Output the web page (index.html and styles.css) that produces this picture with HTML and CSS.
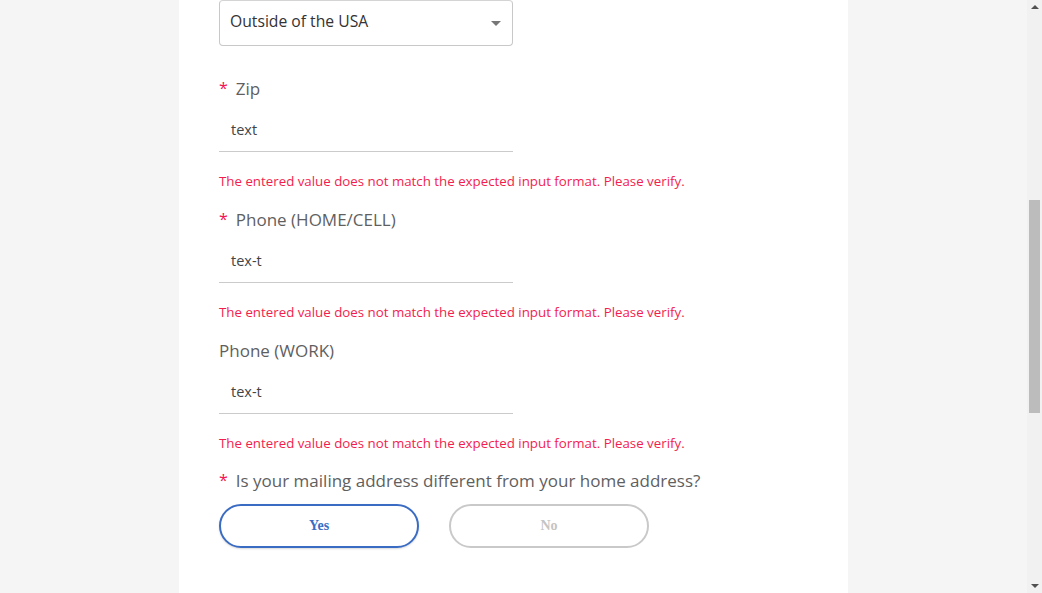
FILE: index.html
```html
<!DOCTYPE html>
<html lang="en">
<head>
<meta charset="utf-8">
<title>Address form</title>
<link rel="stylesheet" href="styles.css">
</head>
<body>
<div class="viewport">
  <main class="page">
    <div class="panel">
      <div class="select">
        <span class="select-value">Outside of the USA</span>
        <span class="caret"></span>
      </div>

      <div class="field">
        <div class="label"><span class="req">*</span>Zip</div>
        <div class="input">text</div>
        <div class="error">The entered value does not match the expected input format. Please verify.</div>
      </div>

      <div class="field">
        <div class="label"><span class="req">*</span>Phone (HOME/CELL)</div>
        <div class="input">tex-t</div>
        <div class="error">The entered value does not match the expected input format. Please verify.</div>
      </div>

      <div class="field">
        <div class="label">Phone (WORK)</div>
        <div class="input">tex-t</div>
        <div class="error">The entered value does not match the expected input format. Please verify.</div>
      </div>

      <div class="question">
        <div class="label"><span class="req">*</span>Is your mailing address different from your home address?</div>
        <div class="choices">
          <button class="choice selected">Yes</button>
          <button class="choice">No</button>
        </div>
      </div>
    </div>
  </main>
  <div class="scrollbar">
    <span class="arrow up"></span>
    <div class="track"><div class="thumb"></div></div>
    <span class="arrow down"></span>
  </div>
</div>
</body>
</html>
```

FILE: styles.css
```css
html, body {
  margin: 0;
  padding: 0;
  height: 593px;
  overflow: hidden;
}

body {
  font-family: "Open Sans", Lato, sans-serif;
  background: #f5f5f5;
}

.viewport {
  display: flex;
  height: 593px;
}

.page {
  flex: 1;
  background: #f5f5f5;
  display: flex;
}

.panel {
  margin-left: 179px;
  width: 669px;
  background: #ffffff;
  padding-left: 40px;
  box-sizing: border-box;
}

.select {
  width: 294px;
  height: 46px;
  box-sizing: border-box;
  border: 1px solid #c8c8c8;
  border-top-color: #d4d4d4;
  border-radius: 4px;
  display: flex;
  align-items: center;
  justify-content: space-between;
  padding: 0 10px 0 10px;
  margin-bottom: 31px;
}

.select-value {
  font-size: 15.7px;
  color: #333;
  margin-top: -4px;
}

.caret {
  width: 0;
  height: 0;
  border-left: 5px solid transparent;
  border-right: 5px solid transparent;
  border-top: 5px solid #777;
  margin-right: 1px;
}

.field {
  margin-bottom: 18px;
}

.label {
  font-size: 17px;
  line-height: 24px;
  height: 24px;
  color: #5f5f5f;
}

.req {
  color: #f2134c;
  font-size: 16px;
  line-height: 0;
  margin-right: 8px;
  vertical-align: 1px;
}

.input {
  width: 294px;
  height: 43px;
  box-sizing: border-box;
  margin-top: 8px;
  border-bottom: 1px solid #cbcbcb;
  padding-left: 12px;
  font-size: 14.5px;
  line-height: 42px;
  color: #444;
}

.error {
  margin-top: 20px;
  font-size: 13.3px;
  line-height: 18px;
  color: #f31d4e;
}

.question {
  margin-top: -1px;
}

.choices {
  display: flex;
  gap: 30px;
  margin-top: 11px;
}

.choice {
  width: 200px;
  height: 44px;
  box-sizing: border-box;
  border-radius: 22px;
  background: #fff;
  border: 2px solid #c9c9c9;
  font-family: "Liberation Serif", "Times New Roman", serif;
  font-weight: bold;
  font-size: 14px;
  color: #c4c4c4;
  padding: 0;
}

.choice.selected {
  border-color: #3a6cc3;
  color: #3a6cc3;
  box-shadow: 0 1px 2px rgba(0, 0, 0, 0.15);
}

.scrollbar {
  width: 15px;
  background: #f1f1f1;
  display: flex;
  flex-direction: column;
  align-items: center;
}

.arrow {
  width: 0;
  height: 0;
  border-left: 4px solid transparent;
  border-right: 4px solid transparent;
}

.arrow.up {
  border-bottom: 4px solid #505050;
  margin-top: 5px;
}

.arrow.down {
  border-top: 4px solid #505050;
  margin-bottom: 5px;
}

.track {
  flex: 1;
  width: 100%;
  padding-top: 191px;
  box-sizing: border-box;
}

.thumb {
  width: 11px;
  height: 213px;
  margin-left: 2px;
  background: #bcbcbc;
}
```
